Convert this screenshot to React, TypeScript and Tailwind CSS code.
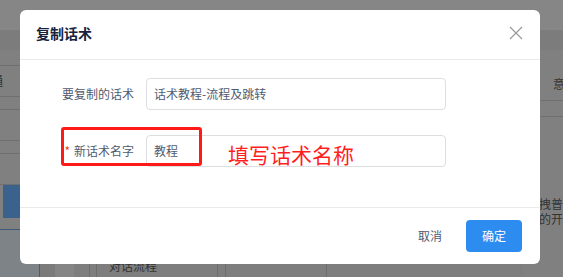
const font = { fontFamily: '"Noto Sans CJK SC", "Noto Sans", sans-serif' };

function Backdrop() {
  return (
    <div className="flex h-full w-full flex-col bg-[#808080]">
      <div className="h-[30px] bg-[#868686]" />
      <div className="h-[20px] bg-[#7c7c7c]" />
      <div className="flex flex-1">
        {/* left edge of page table */}
        <div className="flex w-[40px] flex-col">
          <div className="h-[16px] border-b border-[#6f6f6f]" />
          <div className="flex h-[31px] items-center border-b border-[#6f6f6f] text-[12px] text-[#333]">
            <span className="-ml-[9px]">通</span>
          </div>
          <div className="h-[13px] border-b border-[#6f6f6f]" />
          <div className="h-[31px] border-b border-[#6f6f6f]" />
          <div className="h-[13px] border-b border-[#6f6f6f]" />
          <div className="h-[31px] border-b border-[#6f6f6f]" />
          <div className="ml-[3px] h-[33px] bg-[#3b628c]" />
          <div className="h-[12px] border-b border-[#3f5a78]" />
          <div className="flex flex-1 border-r border-[#46607b] bg-[#7d8387]" />
        </div>
        <div className="flex w-[15px] flex-col justify-end">
          <div className="h-[14px] bg-[#7b7b7b]" />
        </div>
        <div className="flex flex-1 flex-col">
          <div className="flex-1" />
          <div className="flex h-[14px] items-start bg-[#7e7e7e]">
            <div className="w-[19px] self-stretch bg-[#858585]" />
            <div className="w-[16px] self-stretch border-r border-[#6d6d6d]" />
            <div className="w-[7px] self-stretch border-r border-[#6d6d6d]" />
            <span className="ml-[12px] -mt-[3px] text-[12px] leading-none text-[#333]">对话流程</span>
            <div className="ml-[60px] w-[1px] self-stretch bg-[#6d6d6d]" />
            <div className="ml-[7px] w-[1px] self-stretch bg-[#6d6d6d]" />
            <div className="ml-[100px] w-[1px] self-stretch bg-[#6d6d6d]" />
          </div>
        </div>
        {/* right edge of page table */}
        <div className="flex w-[40px] flex-col overflow-hidden text-[12px] leading-none text-[#333]">
          <div className="flex h-[51px] items-end border-b border-[#6f6f6f] pb-[10px] pl-[30px]">意</div>
          <div className="h-[16px] border-b border-[#6f6f6f]" />
          <div className="flex h-[108px] flex-col justify-end gap-[3px] pl-[4px]">
            <span className="whitespace-nowrap">随拽普</span>
            <span className="whitespace-nowrap">认的开</span>
          </div>
          <div className="flex-1" />
        </div>
      </div>
    </div>
  );
}

export default function App() {
  return (
    <div className="relative h-[277px] w-[563px] overflow-hidden" style={font}>
      <Backdrop />

      <div className="absolute left-[20px] top-[10px] flex h-[254px] w-[520px] flex-col rounded-[6px] bg-white">
        <div className="flex h-[50px] items-center justify-between border-b border-[#e8eaec] pb-[3px] pl-[16px] pr-[16px]">
          <span className="text-[14px] font-bold text-[#17233d]">复制话术</span>
          <svg width="14" height="14" viewBox="0 0 14 14" className="mr-[1px]">
            <path d="M1 1 L13 13 M13 1 L1 13" stroke="#999" strokeWidth="1.2" fill="none" />
          </svg>
        </div>

        <div className="flex flex-1 flex-col gap-[25px] pl-[16px] pt-[18px]">
          <div className="flex items-center">
            <label className="w-[110px] pr-[12px] text-right text-[12px] text-[#515a6e]">要复制的话术</label>
            <div className="flex h-[32px] w-[300px] items-center rounded-[4px] border border-[#dcdee2] px-[7px] text-[12px] text-[#515a6e]">
              话术教程-流程及跳转
            </div>
          </div>
          <div className="flex items-center">
            <label className="w-[110px] pr-[12px] text-right text-[12px] text-[#515a6e]">
              <span className="mr-[4px] text-[#ed4014]">*</span>新话术名字
            </label>
            <div className="flex h-[32px] w-[300px] items-center rounded-[4px] border border-[#dcdee2] px-[7px] text-[12px] text-[#515a6e]">
              教程
            </div>
          </div>
        </div>

        <div className="flex h-[57px] items-start justify-end border-t border-[#e8eaec] pr-[18px] pt-[12px]">
          <button className="h-[32px] w-[56px] text-[12px] text-[#515a6e]">取消</button>
          <button className="ml-[8px] h-[32px] w-[56px] rounded-[4px] bg-[#2d8cf0] text-[12px] text-white">确定</button>
        </div>

        {/* annotation overlay */}
        <div className="absolute left-[41px] top-[117px] h-[39px] w-[141px] rounded-[3px] border-[3px] border-[#ff1a1a]" />
        <div className="absolute left-[208px] top-[131px] text-[21px] leading-[26px] text-[#ff1f1f]">填写话术名称</div>
      </div>
    </div>
  );
}
